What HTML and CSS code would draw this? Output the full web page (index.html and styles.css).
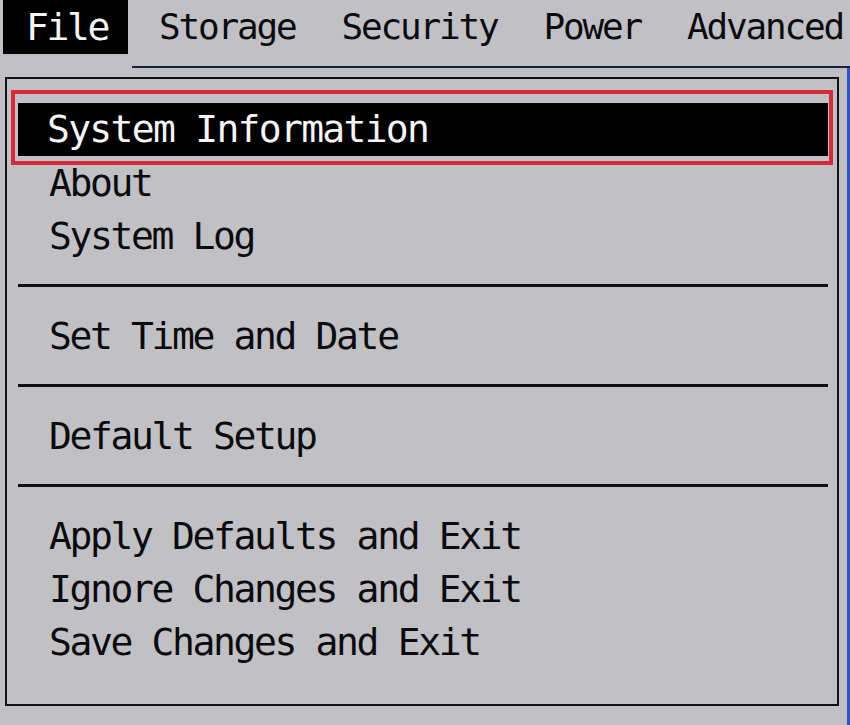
FILE: index.html
```html
<!DOCTYPE html>
<html lang="en">
<head>
<meta charset="utf-8">
<title>Setup Utility - File</title>
<link rel="stylesheet" href="styles.css">
</head>
<body>
<div class="screen">
  <nav class="menubar">
    <span class="tab tab-active">File</span>
    <span class="tab tab-first">Storage</span>
    <span class="tab">Security</span>
    <span class="tab">Power</span>
    <span class="tab">Advanced</span>
  </nav>
  <div class="tabline"></div>
  <div class="window">
    <div class="menu-box">
      <ul class="menu">
        <li class="item item-selected">System Information</li>
        <li class="item">About</li>
        <li class="item">System Log</li>
        <li class="sep"></li>
        <li class="item">Set Time and Date</li>
        <li class="sep"></li>
        <li class="item">Default Setup</li>
        <li class="sep"></li>
        <li class="item">Apply Defaults and Exit</li>
        <li class="item">Ignore Changes and Exit</li>
        <li class="item">Save Changes and Exit</li>
      </ul>
    </div>
  </div>
</div>
</body>
</html>
```
FILE: styles.css
```css
html, body {
  margin: 0;
  padding: 0;
  background: #c0c0c5;
}

.screen {
  width: 850px;
  height: 725px;
  display: flex;
  flex-direction: column;
  overflow: hidden;
  font-family: "DejaVu Sans Mono", "Liberation Mono", monospace;
  font-size: 38px;
  letter-spacing: -2.37px;
  color: #0b0b0d;
  background: #c0c0c5;
}

.menubar {
  height: 54px;
  display: flex;
  align-items: stretch;
  flex: none;
  font-size: 36px;
  letter-spacing: -2.17px;
}

.tab {
  display: flex;
  align-items: center;
  line-height: 54px;
  white-space: pre;
  margin-left: 46px;
}

.tab-active {
  margin-left: 3px;
  width: 125px;
  box-sizing: border-box;
  padding-left: 23px;
  background: #000;
  color: #f4f4f4;
  font-size: 38px;
  letter-spacing: -2.37px;
}

.tab-first {
  margin-left: 31px;
}

.tabline {
  flex: none;
  height: 2px;
  margin: 12px 0 0 132px;
  background: #1b1e46;
}

.window {
  flex: 1;
  border-right: 3px solid #2f52c4;
  padding: 9px 8px 0 5px;
}

.menu-box {
  height: 629px;
  box-sizing: border-box;
  border: 2px solid #121214;
}

.menu {
  list-style: none;
  margin: 24px 9px 0 11px;
  padding: 0;
}

.item {
  height: 53px;
  line-height: 54px;
  padding-left: 31px;
  white-space: pre;
}

.item-selected {
  position: relative;
  background: #000;
  color: #f6f6f6;
  padding-left: 29px;
  line-height: 53px;
  letter-spacing: -1.7px;
}

.item-selected::after {
  content: "";
  position: absolute;
  top: -13px;
  left: -7px;
  right: -5px;
  bottom: -9px;
  border: 4px solid #d42a3c;
  pointer-events: none;
}

.sep {
  height: 3px;
  margin: 22px 0;
  background: #111113;
}
```
